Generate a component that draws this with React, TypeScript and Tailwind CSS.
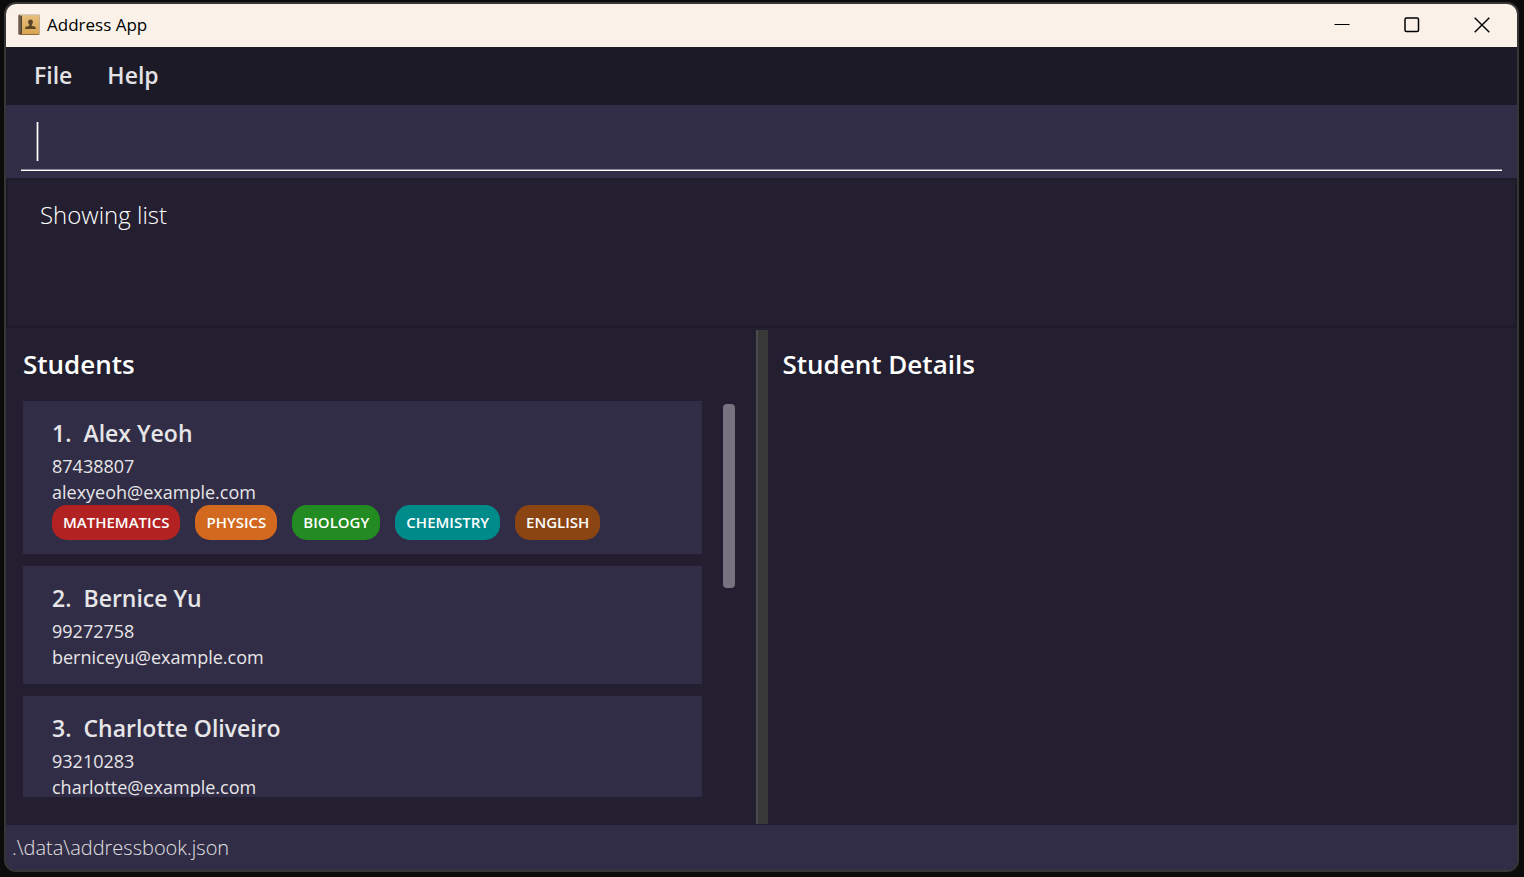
import { useState } from "react";

type Tag = { label: string; color: string };
type Student = { name: string; phone: string; email: string; tags: Tag[] };

const students: Student[] = [
  {
    name: "Alex Yeoh",
    phone: "87438807",
    email: "alexyeoh@example.com",
    tags: [
      { label: "MATHEMATICS", color: "bg-[#b22222]" },
      { label: "PHYSICS", color: "bg-[#d2691e]" },
      { label: "BIOLOGY", color: "bg-[#228b22]" },
      { label: "CHEMISTRY", color: "bg-[#008b8b]" },
      { label: "ENGLISH", color: "bg-[#8b4513]" },
    ],
  },
  { name: "Bernice Yu", phone: "99272758", email: "berniceyu@example.com", tags: [] },
  { name: "Charlotte Oliveiro", phone: "93210283", email: "charlotte@example.com", tags: [] },
];

function BookIcon() {
  return (
    <svg width="22" height="22" viewBox="0 0 22 22" aria-hidden="true">
      <defs>
        <linearGradient id="cover" x1="0" y1="0" x2="0" y2="1">
          <stop offset="0" stopColor="#e6bf7c" />
          <stop offset="1" stopColor="#d9a450" />
        </linearGradient>
      </defs>
      <rect x="0.5" y="0.5" width="21" height="20.5" rx="1" fill="#8b6a3c" />
      <rect x="0.5" y="1.5" width="3.5" height="18.5" fill="#6b5a50" />
      <rect x="3" y="1.5" width="1" height="18.5" fill="#51412f" />
      <rect x="4" y="1.5" width="17" height="18.5" fill="url(#cover)" />
      <rect x="2" y="0.5" width="19" height="1" fill="#f3e8d0" />
      <path
        d="M12.500 5.500c1.500 0 2.400 1.100 2.400 2.600 0 1.100-.5 1.900-1 2.400-.4.500-.2 1.200.5 1.400l2 .7c1 .4 1.400 1 1.400 1.800v.6H7.200v-.6c0-.8.4-1.400 1.400-1.800l2-.7c.7-.2.9-.9.5-1.400-.5-.5-1-1.300-1-2.400 0-1.500.9-2.600 2.400-2.600z"
        fill="#5c4628"
      />
    </svg>
  );
}

function TitleBar() {
  return (
    <header className="flex h-[43px] shrink-0 items-center bg-[#faf2e9] pb-[2px] text-black">
      <div className="flex flex-1 items-center gap-[7px] pl-3">
        <BookIcon />
        <h1 className="text-[17px] leading-6">Address App</h1>
      </div>
      <div className="flex h-full">
        <button aria-label="Minimize" className="flex w-[70px] items-center justify-center">
          <svg width="16" height="16" viewBox="0 0 16 16" fill="none" stroke="currentColor">
            <path d="M0.500 7.500h15" />
          </svg>
        </button>
        <button aria-label="Maximize" className="flex w-[70px] items-center justify-center">
          <svg width="16" height="16" viewBox="0 0 16 16" fill="none" stroke="currentColor" strokeWidth="1.500">
            <rect x="1" y="1" width="13.500" height="13.500" rx="1.500" />
          </svg>
        </button>
        <button aria-label="Close" className="flex w-[70px] items-center justify-center">
          <svg width="16" height="16" viewBox="0 0 16 16" fill="none" stroke="currentColor" strokeWidth="1.400">
            <path d="M0.700 0.700l14.600 14.600M15.300 0.700L0.700 15.300" />
          </svg>
        </button>
      </div>
    </header>
  );
}

function StudentCard({ student, index }: { student: Student; index: number }) {
  return (
    <li className="shrink-0 bg-[#322d46] px-[29px] py-[14px] text-[#e6e6e8]">
      <h3 className="mb-px flex gap-3 text-[23px] leading-[37px] font-semibold">
        <span>{index}.</span>
        <span>{student.name}</span>
      </h3>
      <p className="text-[18px] leading-[26px]">{student.phone}</p>
      <p className="text-[18px] leading-[26px]">{student.email}</p>
      {student.tags.length > 0 && (
        <ul className="flex flex-wrap gap-[15px]">
          {student.tags.map((tag) => (
            <li
              key={tag.label}
              className={`rounded-[15px] px-[11px] text-[15px] leading-[35px] font-semibold text-white ${tag.color}`}
            >
              {tag.label}
            </li>
          ))}
        </ul>
      )}
    </li>
  );
}

export default function App() {
  const [command, setCommand] = useState("");

  return (
    <div className="h-screen bg-[#0b0b0b] pt-[2px] pr-[5px] pb-[5px] pl-1 font-['Open_Sans','Noto_Sans',sans-serif]">
      <div className="flex h-full flex-col overflow-hidden rounded-xl border-2 border-[#363636] bg-[#241f30]">
        <TitleBar />

        <nav className="flex h-[58px] shrink-0 items-center gap-[35px] bg-[#1c1a27] px-7 pb-[2px] text-[23px] font-semibold text-[#e2e2e4]">
          <button>File</button>
          <button>Help</button>
        </nav>

        <div className="h-[73px] shrink-0 bg-[#322d46] px-[15px] pt-[17px]">
          <div className="flex h-[49px] items-start border-b border-white pl-[15px] shadow-[inset_0_-1px_0_#8d8a98]">
            <span className="h-[39px] w-[3px] border-x border-[#7b7888] bg-white" />
            <input
              aria-label="Command"
              className="h-[39px] flex-1 bg-transparent px-1 text-[24px] font-light text-white outline-none"
              value={command}
              onChange={(e) => setCommand(e.target.value)}
            />
          </div>
        </div>

        <section className="h-[150px] shrink-0 border-2 border-[#1e1b29] px-8 pt-[15px]">
          <p className="text-[24px] leading-10 font-light text-white">Showing list</p>
        </section>

        <main className="grid min-h-0 flex-1 grid-cols-[minmax(0,1fr)_12px_minmax(0,1fr)] grid-rows-1 pt-[2px]">
          <section className="flex min-h-0 flex-col pt-4 pr-[21px] pb-7 pl-[17px]">
            <h2 className="mb-[19px] text-[26px] leading-9 font-semibold text-white">Students</h2>
            <div className="flex min-h-0 flex-1 gap-[21px]">
              <ol className="flex min-w-0 flex-1 flex-col gap-3 overflow-hidden">
                {students.map((student, i) => (
                  <StudentCard key={student.email} student={student} index={i + 1} />
                ))}
              </ol>
              <div className="w-3 pt-[3px]">
                <div className="h-[184px] rounded-[4px] bg-[#76727f]" />
              </div>
            </div>
          </section>
          <div className="mb-px border-l-2 border-[#4a4a4b] bg-[#383838]" />
          <section className="px-[15px] pt-4">
            <h2 className="text-[26px] leading-9 font-semibold text-white">Student Details</h2>
          </section>
        </main>

        <footer className="h-[45px] shrink-0 bg-[#322d46] px-[6px] text-[20px] leading-[45px] font-light text-[#e0e0e3]">
          .\data\addressbook.json
        </footer>
      </div>
    </div>
  );
}
